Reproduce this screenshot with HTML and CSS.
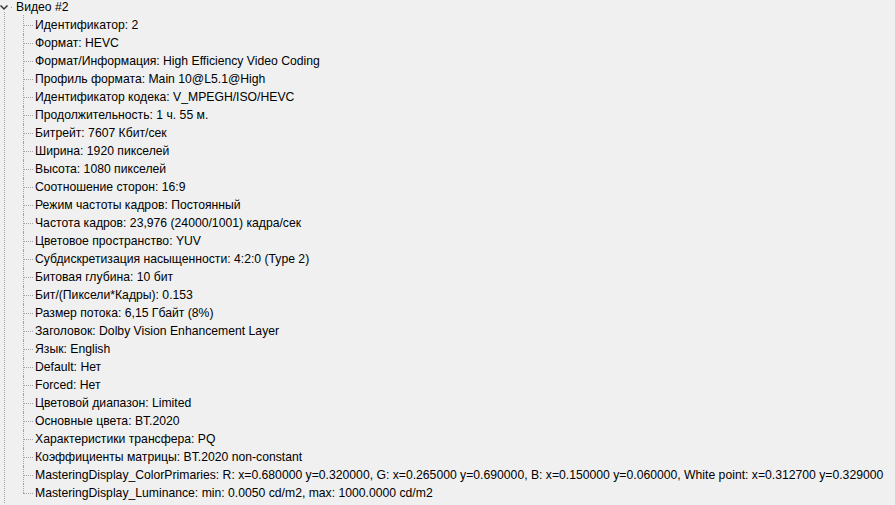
FILE: index.html
```html
<!DOCTYPE html>
<html lang="ru">
<head>
    <meta charset="UTF-8">
    <title>MediaInfo - Видео #2</title>
    <link rel="stylesheet" href="styles.css">
</head>
<body>
    <div class="tree">
        <div class="node-row">
            <svg class="chevron" width="8" height="6" viewBox="0 0 8 6">
                <polyline points="0.5,0.5 4,4 7.5,0.5" fill="none" stroke="#333" stroke-width="1.5"/>
            </svg>
            <span class="stub-dot"></span>
            <span class="label">Видео #2</span>
        </div>
        <ul class="children">
            <li>Идентификатор: 2</li>
            <li>Формат: HEVC</li>
            <li>Формат/Информация: High Efficiency Video Coding</li>
            <li>Профиль формата: Main 10@L5.1@High</li>
            <li>Идентификатор кодека: V_MPEGH/ISO/HEVC</li>
            <li>Продолжительность: 1 ч. 55 м.</li>
            <li>Битрейт: 7607 Кбит/сек</li>
            <li>Ширина: 1920 пикселей</li>
            <li>Высота: 1080 пикселей</li>
            <li>Соотношение сторон: 16:9</li>
            <li>Режим частоты кадров: Постоянный</li>
            <li>Частота кадров: 23,976 (24000/1001) кадра/сек</li>
            <li>Цветовое пространство: YUV</li>
            <li>Субдискретизация насыщенности: 4:2:0 (Type 2)</li>
            <li>Битовая глубина: 10 бит</li>
            <li>Бит/(Пиксели*Кадры): 0.153</li>
            <li>Размер потока: 6,15 Гбайт (8%)</li>
            <li>Заголовок: Dolby Vision Enhancement Layer</li>
            <li>Язык: English</li>
            <li>Default: Нет</li>
            <li>Forced: Нет</li>
            <li>Цветовой диапазон: Limited</li>
            <li>Основные цвета: BT.2020</li>
            <li>Характеристики трансфера: PQ</li>
            <li>Коэффициенты матрицы: BT.2020 non-constant</li>
            <li>MasteringDisplay_ColorPrimaries: R: x=0.680000 y=0.320000, G: x=0.265000 y=0.690000, B: x=0.150000 y=0.060000, White point: x=0.312700 y=0.329000</li>
            <li>MasteringDisplay_Luminance: min: 0.0050 cd/m2, max: 1000.0000 cd/m2</li>
        </ul>
    </div>
</body>
</html>
```

FILE: styles.css
```css
html, body {
    margin: 0;
    height: 100%;
    overflow: hidden;
}
body {
    background: #f0f0f0;
    color: #000;
    font-family: "Liberation Sans", Arial, sans-serif;
    font-size: 12.2px;
}
.tree {
    position: relative;
    margin-top: -2px;
    min-height: 100%;
}
/* line of the parent level, runs past the bottom */
.tree::before {
    content: "";
    position: absolute;
    left: 4px;
    top: 14px;
    bottom: 0;
    border-left: 1px dotted #a0a0a0;
}
.node-row {
    display: flex;
    align-items: center;
    height: 18px;
}
.chevron {
    margin-top: 1px;
}
.stub-dot {
    width: 1px;
    height: 1px;
    background: #a0a0a0;
    margin-left: 3px;
}
.label {
    margin-left: 4px;
    white-space: nowrap;
}
.children {
    list-style: none;
    margin: 0;
    padding: 0 0 0 35px;
}
.children li {
    position: relative;
    height: 18px;
    line-height: 18px;
    white-space: nowrap;
}
.children li::before {
    content: "";
    position: absolute;
    left: -12px;
    top: 9px;
    width: 10px;
    border-top: 1px dotted #a0a0a0;
}
.children li::after {
    content: "";
    position: absolute;
    left: -12px;
    top: 0;
    bottom: 0;
    border-left: 1px dotted #a0a0a0;
}
.children li:first-child::after {
    top: -1px;
}
.children li:last-child::after {
    bottom: 9px;
}
```
